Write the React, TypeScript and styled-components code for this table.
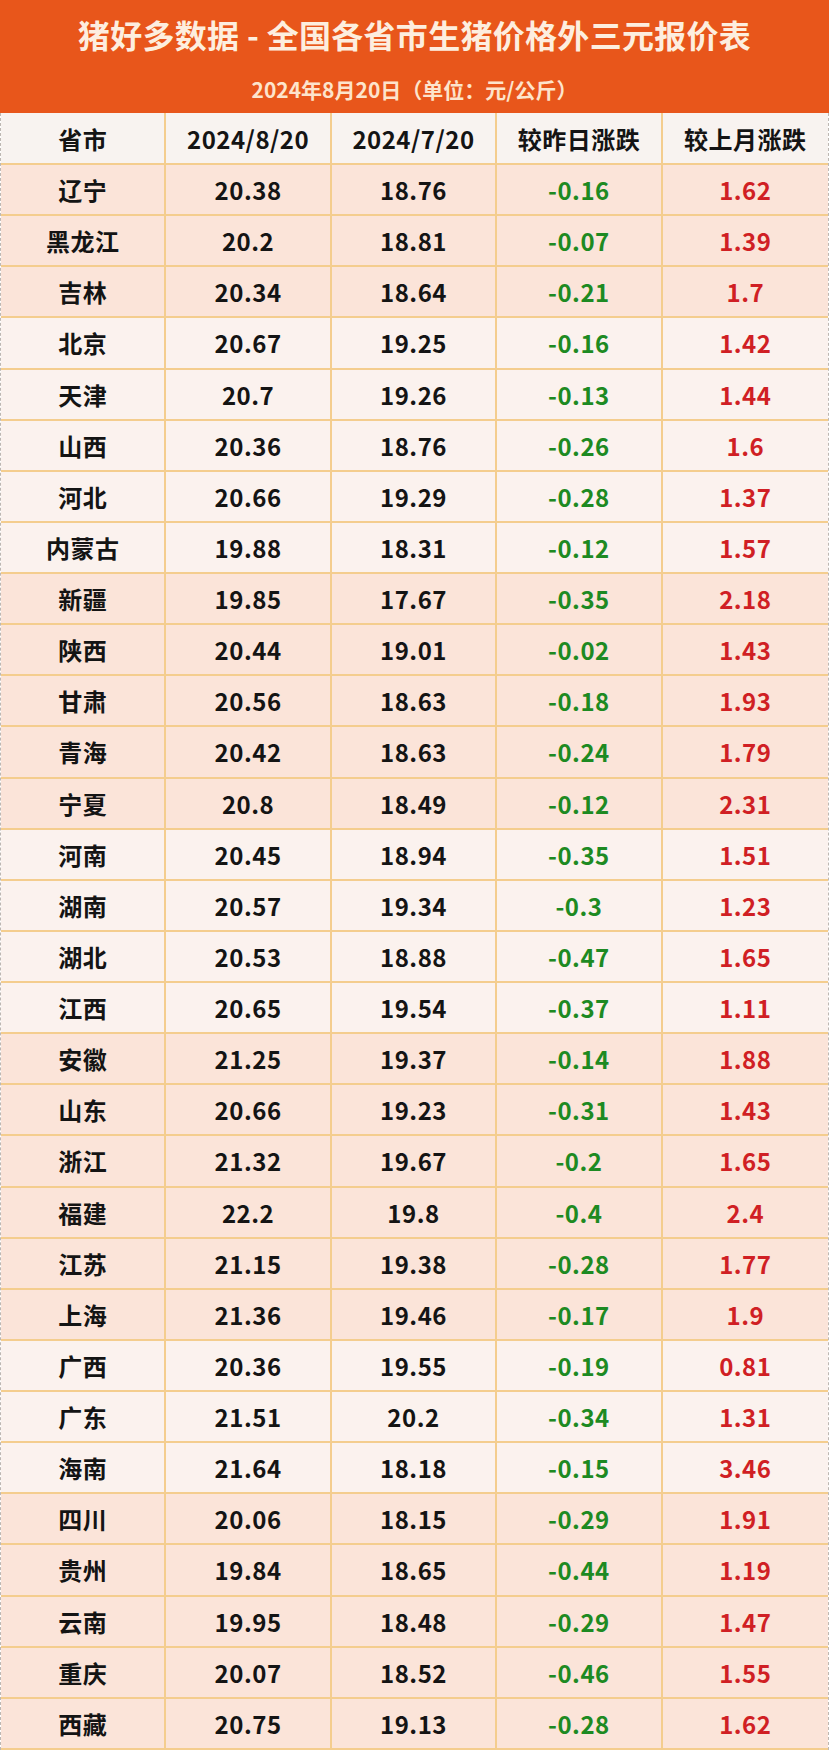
import React from 'react';
import styled, { createGlobalStyle } from 'styled-components';

const GlobalStyle = createGlobalStyle`
  html, body {
    margin: 0;
    padding: 0;
    background: #ffffff;
  }
  body {
    font-family: 'Noto Sans CJK SC', 'Noto Sans', sans-serif;
  }
`;

const Page = styled.div`
  width: 829px;
  display: flex;
  flex-direction: column;
`;

const Banner = styled.div`
  height: 113px;
  box-sizing: border-box;
  padding-top: 14px;
  background: #e8561b;
  display: flex;
  flex-direction: column;
  align-items: center;
`;

const Title = styled.h1`
  margin: 0;
  font-size: 32px;
  line-height: 40px;
  font-weight: 700;
  color: #fdeedf;
  letter-spacing: 0.3px;
`;

const Subtitle = styled.div`
  margin-top: 21px;
  font-size: 21px;
  line-height: 28px;
  font-weight: 700;
  color: #fde4cc;
`;

const Table = styled.div`
  display: flex;
  flex-direction: column;
  border-left: 1px dashed #bdb7b2;
  border-right: 1px dashed #bdb7b2;
`;

const Row = styled.div<{ $tone: 'head' | 'pink' | 'light'; $head?: boolean }>`
  display: grid;
  grid-template-columns: repeat(5, 1fr);
  height: ${({ $head }) => ($head ? '52px' : 'calc((1750px - 165px) / 31)')};
  box-sizing: border-box;
  border-bottom: 2px solid #f4cd8e;
  background: ${({ $tone }) =>
    $tone === 'pink' ? '#fbe4d9' : $tone === 'light' ? '#fbf2ee' : '#f8f3f0'};
`;

const Cell = styled.div<{ $color?: string }>`
  display: flex;
  align-items: center;
  justify-content: center;
  font-size: 24px;
  font-weight: 700;
  letter-spacing: 0.5px;
  color: ${({ $color }) => $color || '#141414'};
  border-right: 2px solid #f4cd8e;
  &:last-child {
    border-right: none;
  }
`;

type Item = [string, string, string, string, string];

const data: Item[] = [
  ['辽宁', '20.38', '18.76', '-0.16', '1.62'],
  ['黑龙江', '20.2', '18.81', '-0.07', '1.39'],
  ['吉林', '20.34', '18.64', '-0.21', '1.7'],
  ['北京', '20.67', '19.25', '-0.16', '1.42'],
  ['天津', '20.7', '19.26', '-0.13', '1.44'],
  ['山西', '20.36', '18.76', '-0.26', '1.6'],
  ['河北', '20.66', '19.29', '-0.28', '1.37'],
  ['内蒙古', '19.88', '18.31', '-0.12', '1.57'],
  ['新疆', '19.85', '17.67', '-0.35', '2.18'],
  ['陕西', '20.44', '19.01', '-0.02', '1.43'],
  ['甘肃', '20.56', '18.63', '-0.18', '1.93'],
  ['青海', '20.42', '18.63', '-0.24', '1.79'],
  ['宁夏', '20.8', '18.49', '-0.12', '2.31'],
  ['河南', '20.45', '18.94', '-0.35', '1.51'],
  ['湖南', '20.57', '19.34', '-0.3', '1.23'],
  ['湖北', '20.53', '18.88', '-0.47', '1.65'],
  ['江西', '20.65', '19.54', '-0.37', '1.11'],
  ['安徽', '21.25', '19.37', '-0.14', '1.88'],
  ['山东', '20.66', '19.23', '-0.31', '1.43'],
  ['浙江', '21.32', '19.67', '-0.2', '1.65'],
  ['福建', '22.2', '19.8', '-0.4', '2.4'],
  ['江苏', '21.15', '19.38', '-0.28', '1.77'],
  ['上海', '21.36', '19.46', '-0.17', '1.9'],
  ['广西', '20.36', '19.55', '-0.19', '0.81'],
  ['广东', '21.51', '20.2', '-0.34', '1.31'],
  ['海南', '21.64', '18.18', '-0.15', '3.46'],
  ['四川', '20.06', '18.15', '-0.29', '1.91'],
  ['贵州', '19.84', '18.65', '-0.44', '1.19'],
  ['云南', '19.95', '18.48', '-0.29', '1.47'],
  ['重庆', '20.07', '18.52', '-0.46', '1.55'],
  ['西藏', '20.75', '19.13', '-0.28', '1.62'],
];

// region groups alternate pink / light
const lightRows = new Set([3, 4, 5, 6, 7, 13, 14, 15, 16, 23, 24, 25]);

export default function App() {
  return (
    <Page>
      <GlobalStyle />
      <Banner>
        <Title>猪好多数据 - 全国各省市生猪价格外三元报价表</Title>
        <Subtitle>2024年8月20日（单位：元/公斤）</Subtitle>
      </Banner>
      <Table>
        <Row $tone="head" $head>
          <Cell>省市</Cell>
          <Cell>2024/8/20</Cell>
          <Cell>2024/7/20</Cell>
          <Cell>较昨日涨跌</Cell>
          <Cell>较上月涨跌</Cell>
        </Row>
        {data.map((d, i) => (
          <Row key={d[0]} $tone={lightRows.has(i) ? 'light' : 'pink'}>
            <Cell>{d[0]}</Cell>
            <Cell>{d[1]}</Cell>
            <Cell>{d[2]}</Cell>
            <Cell $color="#1d8a22">{d[3]}</Cell>
            <Cell $color="#d01f24">{d[4]}</Cell>
          </Row>
        ))}
      </Table>
    </Page>
  );
}
